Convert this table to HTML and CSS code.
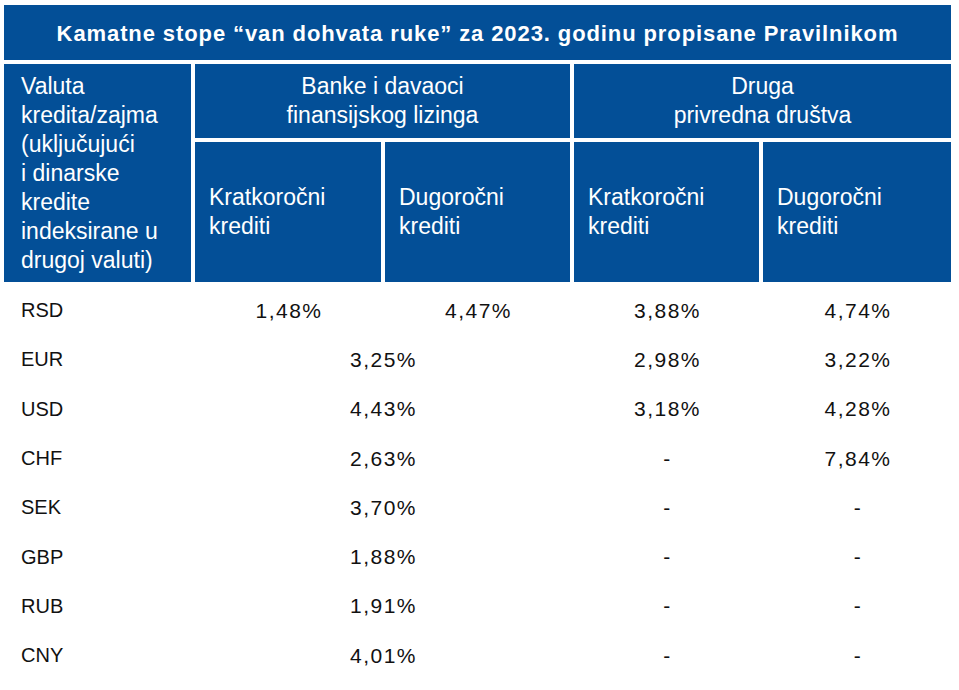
FILE: index.html
```html
<!DOCTYPE html>
<html lang="sr">
<head>
<meta charset="utf-8">
<title>Kamatne stope</title>
<link rel="stylesheet" href="styles.css">
</head>
<body>
<div class="page">
  <div class="title">Kamatne stope “van dohvata ruke” za 2023. godinu propisane Pravilnikom</div>
  <div class="head">
    <div class="hc valuta">Valuta<br>kredita/zajma<br>(uključujući<br>i dinarske<br>kredite<br>indeksirane u<br>drugoj valuti)</div>
    <div class="hc group">Banke i davaoci<br>finansijskog lizinga</div>
    <div class="hc group">Druga<br>privredna društva</div>
    <div class="hc sub">Kratkoročni<br>krediti</div>
    <div class="hc sub">Dugoročni<br>krediti</div>
    <div class="hc sub">Kratkoročni<br>krediti</div>
    <div class="hc sub">Dugoročni<br>krediti</div>
  </div>
  <div class="rows">
    <div class="cur">RSD</div><div class="val">1,48%</div><div class="val">4,47%</div><div class="val">3,88%</div><div class="val">4,74%</div>
    <div class="cur">EUR</div><div class="val span2">3,25%</div><div class="val">2,98%</div><div class="val">3,22%</div>
    <div class="cur">USD</div><div class="val span2">4,43%</div><div class="val">3,18%</div><div class="val">4,28%</div>
    <div class="cur">CHF</div><div class="val span2">2,63%</div><div class="val">-</div><div class="val">7,84%</div>
    <div class="cur">SEK</div><div class="val span2">3,70%</div><div class="val">-</div><div class="val">-</div>
    <div class="cur">GBP</div><div class="val span2">1,88%</div><div class="val">-</div><div class="val">-</div>
    <div class="cur">RUB</div><div class="val span2">1,91%</div><div class="val">-</div><div class="val">-</div>
    <div class="cur">CNY</div><div class="val span2">4,01%</div><div class="val">-</div><div class="val">-</div>
  </div>
</div>
</body>
</html>
```
FILE: styles.css
```css
html, body {
  margin: 0;
  padding: 0;
  background: #ffffff;
}

body {
  font-family: "Liberation Sans", Arial, sans-serif;
  color: #111111;
}

.page {
  width: 947px;
  padding: 5px 0 0 4px;
}

.title {
  height: 55px;
  box-sizing: border-box;
  padding-top: 2px;
  margin-bottom: 4px;
  background: #034f97;
  color: #ffffff;
  font-size: 22px;
  font-weight: bold;
  letter-spacing: 0.9px;
  display: flex;
  align-items: center;
  justify-content: center;
}

.head {
  display: grid;
  grid-template-columns: 187px 186px 185px 185px 188px;
  grid-template-rows: 74px 140px;
  gap: 4px;
}

.hc {
  background: #034f97;
  color: #ffffff;
  font-size: 23px;
  line-height: 29px;
  display: flex;
  flex-direction: column;
  justify-content: center;
}

.valuta {
  grid-row: 1 / 3;
  padding-left: 17px;
}

.group {
  grid-column: span 2;
  text-align: center;
}

.sub {
  padding-left: 14px;
}

.rows {
  display: grid;
  grid-template-columns: 187px 186px 185px 185px 188px;
  grid-auto-rows: 49.3px;
  column-gap: 4px;
  margin-top: 4px;
  font-size: 20px;
}

.cur {
  display: flex;
  align-items: center;
  padding-left: 17px;
}

.val {
  display: flex;
  align-items: center;
  justify-content: center;
  font-size: 21px;
  letter-spacing: 1.5px;
  padding-left: 2px;
}

.span2 {
  grid-column: span 2;
}
```
